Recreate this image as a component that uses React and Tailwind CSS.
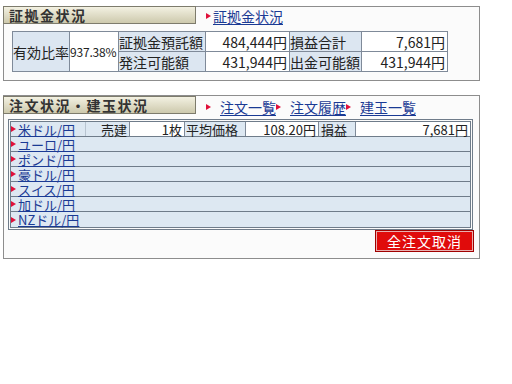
import React from 'react';

const font = { fontFamily: '"Noto Sans CJK JP", "MS UI Gothic", sans-serif' };

const Bullet = () => (
  <span className="inline-block w-0 h-0 border-y-[3px] border-y-transparent border-l-[5px] border-l-[#e0103a] mr-[2px]" />
);

const NavLink = ({ children, gap = false, small = false }) => (
  <span className={`flex items-center ${small ? 'h-[13px]' : 'h-[14px]'}`}>
    <Bullet />
    {gap && <span className="w-[7px]" />}
    <a
      href="#"
      className={`text-[#1a3a94] underline decoration-1 ${small ? 'underline-offset-1 leading-[13px]' : 'underline-offset-2 leading-[14px]'}`}
    >
      {children}
    </a>
  </span>
);

const PanelHeader = ({ title }) => (
  <div className="w-[193px] h-[18px] -mt-px -ml-px border border-[#7d7b6c] bg-gradient-to-b from-[#f3f1e2] to-[#cdc9ad] flex items-center pl-[5px]">
    <span className="font-bold text-[14px] leading-none tracking-[1.5px] text-[#333]">{title}</span>
  </div>
);

const pairs = ['ユーロ/円', 'ポンド/円', '豪ドル/円', 'スイス/円', '加ドル/円', 'NZドル/円'];

const label = 'bg-[#dce6f1] border border-[#7f8a99] text-left whitespace-nowrap overflow-hidden';
const value = 'bg-white border border-[#7f8a99] pr-[2px] text-right whitespace-nowrap overflow-hidden';

export default function App() {
  return (
    <div className="w-[512px] h-[384px] bg-white text-[14px] text-[#222] leading-none" style={font}>
      <div className="ml-[3px] mt-[6px] w-[477px] h-[75px] border border-[#8d8d8d] bg-[#fbfbfb]">
        <div className="flex items-center">
          <PanelHeader title="証拠金状況" />
          <div className="ml-[10px] text-[14px]">
            <NavLink>証拠金状況</NavLink>
          </div>
        </div>
        <table className="ml-[8px] mt-[7px] border-collapse w-[435px] table-fixed">
          <colgroup>
            <col className="w-[57px]" />
            <col className="w-[49px]" />
            <col className="w-[87px]" />
            <col className="w-[84px]" />
            <col className="w-[72px]" />
            <col className="w-[86px]" />
          </colgroup>
          <tbody>
            <tr className="h-[20px]">
              <td rowSpan={2} className={label}>有効比率</td>
              <td rowSpan={2} className="bg-white border border-[#7f8a99] text-left text-[12px] tracking-[-0.2px] whitespace-nowrap">937.38%</td>
              <td className={label}>証拠金預託額</td>
              <td className={value}>484,444円</td>
              <td className={label}>損益合計</td>
              <td className={value}>7,681円</td>
            </tr>
            <tr className="h-[20px]">
              <td className={label}>発注可能額</td>
              <td className={value}>431,944円</td>
              <td className={label}>出金可能額</td>
              <td className={value}>431,944円</td>
            </tr>
          </tbody>
        </table>
      </div>

      <div className="ml-[3px] mt-[14px] w-[477px] h-[164px] border border-[#8d8d8d] bg-[#fbfbfb]">
        <div className="flex items-center">
          <PanelHeader title="注文状況・建玉状況" />
          <div className="ml-[10px] flex text-[14px] pt-[4px]">
            <NavLink gap>注文一覧</NavLink>
            <NavLink gap>注文履歴</NavLink>
            <NavLink gap>建玉一覧</NavLink>
          </div>
        </div>
        <div className="ml-[4px] mt-[5px] w-[465px] border-[3px] border-double border-[#6f7c8a] text-[13px]">
          <div className="flex h-[15px] border-b border-[#6f7c8a] whitespace-nowrap">
            <div className="w-[74px] bg-[#dde8f2] flex items-center"><NavLink small>米ドル/円</NavLink></div>
            <div className="w-[44px] bg-[#dde8f2] border-l border-[#b8c4d0] flex items-center justify-end pr-[2px]">売建</div>
            <div className="w-[55px] bg-white border-l border-[#7f8a99] flex items-center justify-end pr-[2px]">1枚</div>
            <div className="w-[61px] bg-[#dde8f2] border-l border-[#7f8a99] flex items-center pl-[1px]">平均価格</div>
            <div className="w-[73px] bg-white border-l border-[#7f8a99] flex items-center justify-end pr-[2px]">108.20円</div>
            <div className="w-[37px] bg-[#dde8f2] border-l border-[#7f8a99] flex items-center pl-[2px]">損益</div>
            <div className="flex-1 bg-white border-l border-[#7f8a99] flex items-center justify-end pr-[2px]">7,681円</div>
          </div>
          {pairs.map((p, i) => (
            <div
              key={p}
              className={`flex items-center h-[15px] bg-[#dde8f2] whitespace-nowrap ${i < pairs.length - 1 ? 'border-b border-[#6f7c8a]' : ''}`}
            >
              <NavLink small>{p}</NavLink>
            </div>
          ))}
        </div>
        <div className="flex justify-end pr-[6px] mt-[1px]">
          <button className="w-[97px] h-[20px] bg-[#e00b0b] border border-[#e8b0b0] outline outline-1 outline-[#a00000] text-white text-[14px] leading-none tracking-[1px]">
            全注文取消
          </button>
        </div>
      </div>
    </div>
  );
}
